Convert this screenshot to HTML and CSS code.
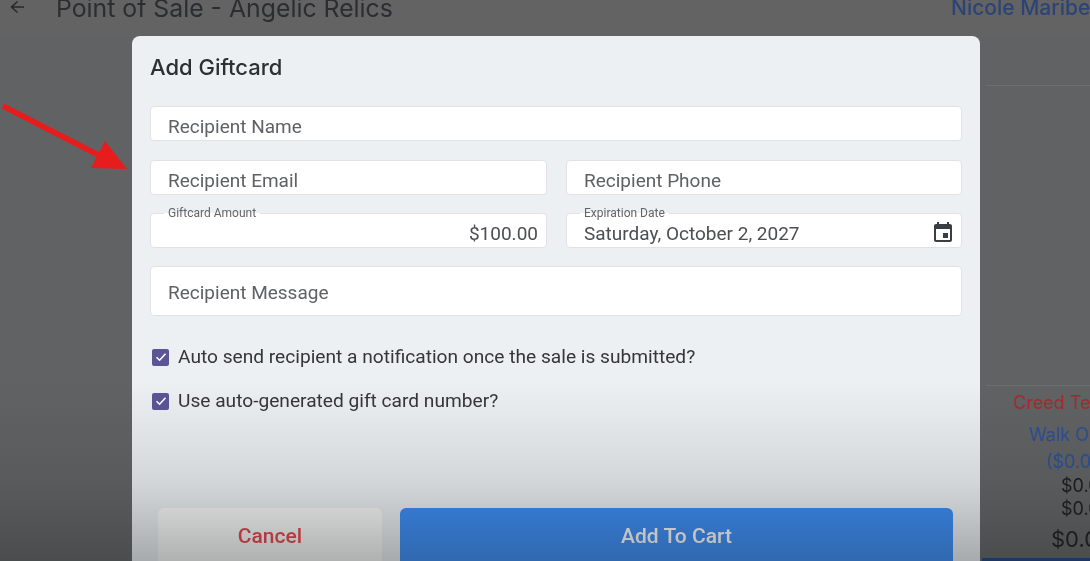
FILE: index.html
```html
<!DOCTYPE html>
<html lang="en">
<head>
  <meta charset="UTF-8">
  <meta name="viewport" content="width=device-width, initial-scale=1.0">
  <title>Point of Sale - Angelic Relics</title>
  <link rel="stylesheet" href="styles.css">
</head>
<body>
  <div class="page">
    <header class="topbar">
      <svg class="back-icon" width="16" height="16" viewBox="0 0 16 16" aria-hidden="true">
        <path d="M15 7H3.5M8.5 1.5 2.5 7l6 5.5" fill="none" stroke="#26282b" stroke-width="1.5"/>
      </svg>
      <h1>Point of Sale - Angelic Relics</h1>
      <span class="user-name">Nicole Maribel</span>
    </header>

    <div class="content">
      <aside class="sidebar">
        <div class="sidebar-head"></div>
        <p class="customer">Creed Test</p>
        <p class="walk-in">Walk Out</p>
        <p class="walk-total">($0.00)</p>
        <p class="amount">$0.00</p>
        <p class="amount">$0.00</p>
        <p class="total">$0.00</p>
      </aside>
    </div>

    <section class="modal">
      <h2>Add Giftcard</h2>
      <div class="form-grid">
        <div class="field wide name-field placeholder">Recipient Name</div>
        <div class="field placeholder">Recipient Email</div>
        <div class="field placeholder">Recipient Phone</div>
        <div class="field amount-field">
          <label>Giftcard Amount</label>
          $100.00
        </div>
        <div class="field date-field">
          <label>Expiration Date</label>
          Saturday, October 2, 2027
          <svg class="calendar-icon" width="24" height="24" viewBox="0 0 24 24" aria-hidden="true">
            <path fill="#3a3d42" d="M17 12h-5v5h5v-5zM16 1v2H8V1H6v2H5c-1.11 0-2 .9-2 2v14c0 1.1.89 2 2 2h14c1.1 0 2-.9 2-2V5c0-1.1-.9-2-2-2h-1V1h-2zm3 18H5V8h14v11z"/>
          </svg>
        </div>
        <div class="field wide message-field placeholder">Recipient Message</div>
      </div>

      <div class="checks">
        <div class="check-row">
          <span class="checkbox">
            <svg width="12" height="12" viewBox="0 0 12 12" aria-hidden="true"><path d="M1.5 6.2 4.6 9.2 10.5 2.8" fill="none" stroke="#fff" stroke-width="1.6"/></svg>
          </span>
          Auto send recipient a notification once the sale is submitted?
        </div>
        <div class="check-row">
          <span class="checkbox">
            <svg width="12" height="12" viewBox="0 0 12 12" aria-hidden="true"><path d="M1.5 6.2 4.6 9.2 10.5 2.8" fill="none" stroke="#fff" stroke-width="1.6"/></svg>
          </span>
          Use auto-generated gift card number?
        </div>
      </div>

      <div class="actions">
        <button class="btn-cancel">Cancel</button>
        <button class="btn-add">Add To Cart</button>
      </div>
    </section>

    <svg class="arrow" width="130" height="75" viewBox="0 0 130 75" aria-hidden="true">
      <path d="M3 3 108 57" stroke="#e71c1c" stroke-width="5.5" fill="none"/>
      <path d="M105 38 127 66 91 65z" fill="#e71c1c"/>
    </svg>
  </div>
</body>
</html>
```

FILE: styles.css
```css
* {
  box-sizing: border-box;
}
html, body {
  margin: 0;
  height: 100%;
  overflow: hidden;
}
.page {
  position: relative;
  width: 1090px;
  height: 561px;
  overflow: hidden;
  background-color: #616264;
  font-family: Roboto, "Liberation Sans", sans-serif;
  filter: blur(0.4px);
}
/* video-style dark fade along the bottom */
.page::after {
  content: "";
  position: absolute;
  left: 0;
  right: 0;
  top: 380px;
  bottom: 0;
  background: linear-gradient(rgba(30, 36, 36, 0), rgba(30, 36, 36, 0.04) 20%, rgba(30, 36, 36, 0.12) 55%, rgba(30, 36, 36, 0.19) 70%, rgba(30, 36, 36, 0.34));
  pointer-events: none;
}
.topbar {
  display: flex;
  align-items: flex-end;
  height: 36px;
  padding: 0 0 21px 9px;
  background-color: #636363;
  white-space: nowrap;
}
.back-icon {
  flex: none;
  margin-bottom: -1px;
}
.topbar h1 {
  margin: 0 0 -5px 31px;
  font-family: Inter, sans-serif;
  font-size: 24.8px;
  line-height: 24px;
  font-weight: 400;
  color: #2b2d30;
}
.user-name {
  position: absolute;
  left: 951px;
  top: -4px;
  font-family: Inter, sans-serif;
  font-size: 21px;
  line-height: 24px;
  font-weight: 500;
  color: #2c4475;
}
.content {
  display: flex;
  justify-content: flex-end;
  height: 525px;
}
.sidebar {
  width: 108px;
  height: 100%;
  white-space: nowrap;
  overflow: hidden;
  font-family: Inter, sans-serif;
  border-bottom: 3px solid #1a4384;
}
.sidebar p {
  margin: 0;
}
.sidebar-head {
  height: 50px;
  margin-left: 4px;
  border-bottom: 1px solid #6e6e70;
}
.sidebar .customer {
  margin: 299px 0 0 4px;
  padding: 5px 0 0 27px;
  border-top: 1px solid #6e6e70;
  font-size: 18px;
  line-height: 24px;
  color: #a82a2a;
}
.walk-in {
  padding: 8px 0 0 47px;
  font-size: 18px;
  line-height: 24px;
  color: #2c4f95;
}
.walk-total {
  padding: 3px 0 0 64px;
  font-size: 18px;
  line-height: 24px;
  color: #2c4f95;
}
.amount {
  padding-left: 79px;
  font-size: 18px;
  line-height: 23px;
  color: #1a1a1a;
}
.total {
  padding: 5px 0 0 69px;
  font-size: 22px;
  line-height: 28px;
  color: #1a1a1a;
}
.modal {
  position: absolute;
  left: 132px;
  top: 36px;
  width: 848px;
  height: 560px;
  padding: 17px 18px 0;
  background-color: #edf0f3;
  border-radius: 8px;
}
.modal h2 {
  margin: 0;
  font-family: Inter, sans-serif;
  font-size: 22px;
  line-height: 28px;
  font-weight: 500;
  color: #2c2f33;
}
.form-grid {
  display: grid;
  grid-template-columns: 397px 396px;
  column-gap: 19px;
  row-gap: 18px;
  margin-top: 25px;
}
.field {
  position: relative;
  display: flex;
  align-items: flex-end;
  height: 35px;
  padding: 0 8px 1px 17px;
  background-color: #fff;
  border: 1px solid #e0e2e6;
  border-radius: 4px;
  font-size: 19px;
  line-height: 24px;
  color: #4c4e52;
}
.wide {
  grid-column: 1 / -1;
}
.name-field {
  margin-bottom: 1px;
}
.placeholder {
  color: #5f6166;
}
.field label {
  position: absolute;
  left: 13px;
  top: -8px;
  padding: 0 4px;
  background: linear-gradient(#edf0f3 50%, #fff 50%);
  font-size: 12px;
  line-height: 14px;
  color: #62646a;
}
.amount-field {
  justify-content: flex-end;
}
.date-field {
  justify-content: space-between;
  padding-right: 6px;
}
.calendar-icon {
  margin-bottom: 1px;
}
.message-field {
  align-items: center;
  height: 50px;
  padding-top: 4px;
  padding-bottom: 0;
}
.checks {
  display: flex;
  flex-direction: column;
  gap: 20px;
  margin: 29px 0 0 2px;
}
.check-row {
  display: flex;
  align-items: center;
  gap: 9px;
  height: 24px;
  font-size: 19.15px;
  line-height: 24px;
  color: #34363a;
}
.checkbox {
  display: flex;
  align-items: center;
  justify-content: center;
  flex: none;
  width: 17px;
  height: 17px;
  background-color: #5b5596;
  border-radius: 2px;
}
.actions {
  display: flex;
  gap: 18px;
  margin: 95px 9px 0 8px;
}
.actions button {
  height: 64px;
  padding: 0 0 8px;
  border: none;
  border-radius: 6px;
  font-family: Roboto, sans-serif;
  font-size: 21px;
  font-weight: 500;
}
.btn-cancel {
  width: 224px;
  background-color: #fbfbfb;
  color: #e8444a;
}
.btn-add {
  flex: 1;
  background-color: #3a8cf8;
  color: #fff;
}
.arrow {
  position: absolute;
  left: 0;
  top: 103px;
}
```
